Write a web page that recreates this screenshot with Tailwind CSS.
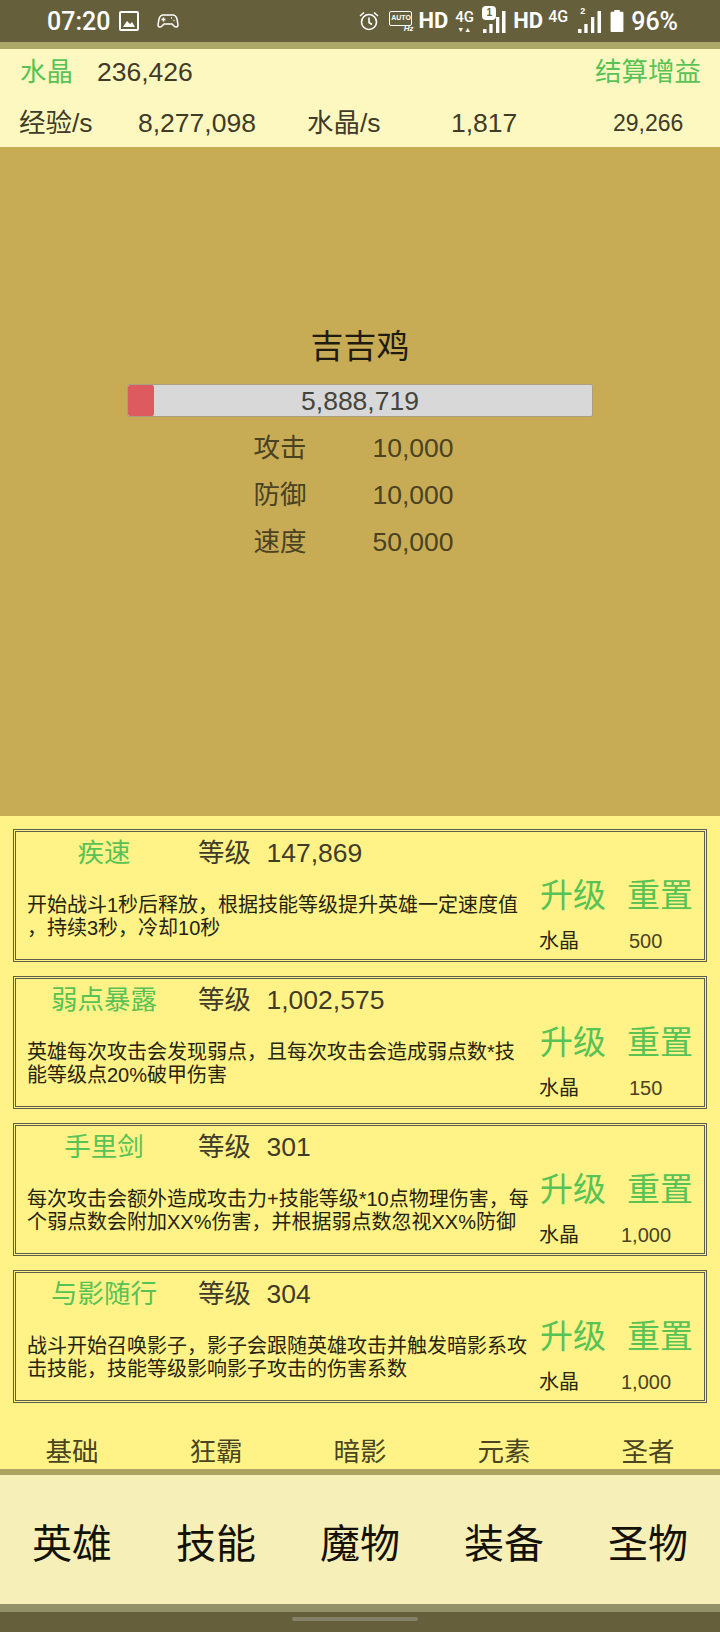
<!DOCTYPE html>
<html lang="zh">
	<head>
		<meta charset="UTF-8" />
		<meta name="viewport" content="width=device-width, initial-scale=1.0" />
		<script src="https://cdn.jsdelivr.net/npm/@tailwindcss/browser@4"></script>
		<title>吉吉鸡</title>
	</head>
	<body class="w-[720px] h-[1632px] overflow-hidden flex flex-col bg-[#665f3c] font-['Liberation_Sans','Noto_Sans_CJK_SC',sans-serif] text-[26.5px] leading-[32px] text-[#3f3b28]">
		<!-- Status bar -->
		<div class="h-[42px] flex items-center pl-[47px] text-white shrink-0">
			<span class="font-['Roboto',sans-serif] text-[25px] font-medium w-[72px] mt-[2px]">07:20</span>
			<svg class="ml-[-1px]" width="22" height="22" viewBox="0 0 22 22" fill="none"><rect x="2" y="2" width="18" height="18" rx="1" stroke="#fff" stroke-width="2"/><path d="M5 17l4-6 3 3 2-2 3 5z" fill="#fff"/></svg>
			<svg class="ml-[17px]" width="22" height="16" viewBox="0 0 22 16" fill="none" stroke="#fff" stroke-width="1.5"><path d="M6 2h10c2 0 3 1 4 4l1 6c0 2-2 3-4 1l-2-2H7l-2 2c-2 2-4 1-4-1l1-6c1-3 2-4 4-4z"/><path d="M4.5 6.500h4M6.500 4.500v4M14 5h1M16.500 7.500h1"/></svg>
			<div class="ml-auto flex items-center pr-[42px]">
				<svg width="22" height="22" viewBox="0 0 22 22" fill="none" stroke="#fff" stroke-width="1.6"><circle cx="11" cy="12" r="7.500"/><path d="M11 7.500V12.500l3 2M2 6l4-3.500M20 6l-4-3.500"/></svg>
				<div class="relative ml-[9px] w-[24px] h-[22px]">
					<div class="w-[23px] h-[15px] border-[1.500px] border-white rounded-[2px] mt-[1px] text-[7px] leading-[12px] font-bold text-center overflow-hidden">AUTO</div>
					<span class="absolute right-0 top-[15px] text-[8px] leading-[8px] italic font-bold">Hz</span>
				</div>
				<span class="ml-[5px] font-['Roboto',sans-serif] text-[22px] font-bold">HD</span>
				<div class="relative ml-[7px] w-[20px] h-[30px] text-[15px] leading-[15px] font-['Roboto',sans-serif] font-medium">
					<span class="absolute left-0 top-[4px]">4G</span>
					<span class="absolute left-[2px] top-[20px] text-[7px] leading-[8px] whitespace-nowrap">▼▲</span>
				</div>
				<div class="relative ml-[6px] w-[28px] h-[32px] mt-[-8px]">
					<svg class="absolute left-0 top-0" width="28" height="32" viewBox="0 0 28 32" fill="#fff"><rect x="2" y="28" width="3.500" height="4"/><rect x="8.300" y="23" width="3.300" height="9"/><rect x="15" y="16" width="3.300" height="16"/><rect x="21" y="10" width="3.500" height="22"/></svg>
					<span class="absolute left-[1px] top-[5px] w-[14px] h-[14px] rounded-[4px] bg-white text-[#665f3c] text-[10px] leading-[14px] font-bold text-center">1</span>
				</div>
				<span class="ml-[4px] font-['Roboto',sans-serif] text-[22px] font-bold">HD</span>
				<span class="ml-[5px] font-['Roboto',sans-serif] text-[16px] font-medium mt-[-8px]">4G</span>
				<div class="relative ml-[10px] w-[26px] h-[32px] mt-[-8px]">
					<span class="absolute left-[2px] top-[4px] text-[9px] leading-[12px] font-bold">2</span>
					<svg class="absolute left-0 top-0" width="26" height="32" viewBox="0 0 26 32" fill="#fff"><rect x="0" y="28" width="3.500" height="4"/><rect x="6.300" y="23" width="3.300" height="9"/><rect x="13" y="16" width="3.300" height="16"/><rect x="19.500" y="10" width="3.500" height="22"/></svg>
				</div>
				<svg class="ml-[6px]" width="14" height="22" viewBox="0 0 14 24" fill="#fff"><path d="M4 0h6v2h3a1 1 0 0 1 1 1v20a1 1 0 0 1-1 1H1a1 1 0 0 1-1-1V3a1 1 0 0 1 1-1h3z"/></svg>
				<span class="ml-[7px] font-['Roboto',sans-serif] text-[25px] font-medium mt-[2px]">96%</span>
			</div>
		</div>
		<div class="h-[7px] bg-[#aba768] shrink-0"></div>

		<!-- Top panel -->
		<div class="h-[98px] bg-[#fdf8c0] shrink-0">
			<div class="h-[45px] flex items-center pl-[20px] pr-[19px]">
				<span class="text-[#58c255] w-[77px]">水晶</span>
				<span>236,426</span>
				<span class="ml-auto text-[#58c255]">结算增益</span>
			</div>
			<div class="flex items-center h-[53px] pt-[5px] pl-[19px]">
				<span class="w-[119px]">经验/s</span>
				<span class="w-[169px]">8,277,098</span>
				<span class="w-[144px]">水晶/s</span>
				<span class="w-[162px]">1,817</span>
				<span class="text-[23px]">29,266</span>
			</div>
		</div>

		<!-- Monster -->
		<div class="h-[669px] bg-[#c7ac55] shrink-0 flex flex-col items-center pt-[179px]">
			<div class="text-[33px] leading-[42px] text-[#1f1b10]">吉吉鸡</div>
			<div class="relative mt-[16px] w-[466px] h-[33px] bg-[#d8d8d8] border border-[#a8a080] rounded-[2px] text-center text-[#44443c] text-[26.5px] leading-[32px]">
				<div class="absolute left-0 top-0 h-full w-[26px] bg-[#dd5a5f] rounded-[2px]"></div>
				<span class="relative">5,888,719</span>
			</div>
			<div class="mt-[15px] w-[200px] flex flex-col gap-[15px] ml-[-13px] text-[#4a4222]">
				<div class="flex h-[32px]"><span class="w-[119px]">攻击</span><span>10,000</span></div>
				<div class="flex h-[32px]"><span class="w-[119px]">防御</span><span>10,000</span></div>
				<div class="flex h-[32px]"><span class="w-[119px]">速度</span><span>50,000</span></div>
			</div>
		</div>

		<!-- Skills -->
		<div class="h-[653px] bg-[#fff388] shrink-0 flex flex-col pt-[13px] px-[13px]">
			<div class="flex flex-col gap-[14px]">
				<div class="h-[133px] border-[3px] border-double border-[#5f5e4c] bg-[#fff388] pl-[11px] flex flex-col">
					<div class="flex h-[42px] items-center">
						<span class="w-[154px] text-center text-[#58c255]">疾速</span>
						<span class="ml-[17px] w-[68.5px]">等级</span>
						<span>147,869</span>
					</div>
					<div class="flex flex-1">
						<p class="w-[512px] shrink-0 whitespace-nowrap text-[20px] leading-[23px] text-[#26230f] pt-[20px]">开始战斗1秒后释放，根据技能等级提升英雄一定速度值<br />，持续3秒，冷却10秒</p>
						<div class="flex-1">
							<div class="flex text-[33px] leading-[40px] text-[#58c255] gap-[21px] mt-[2px] ml-[1px]"><span>升级</span><span>重置</span></div>
							<div class="flex text-[20px] mt-[11px] leading-[28px]"><span class="w-[90px] text-[#2b2710]">水晶</span><span class="text-[#4a4222]">500</span></div>
						</div>
					</div>
				</div>
				<div class="h-[133px] border-[3px] border-double border-[#5f5e4c] bg-[#fff388] pl-[11px] flex flex-col">
					<div class="flex h-[42px] items-center">
						<span class="w-[154px] text-center text-[#58c255]">弱点暴露</span>
						<span class="ml-[17px] w-[68.5px]">等级</span>
						<span>1,002,575</span>
					</div>
					<div class="flex flex-1">
						<p class="w-[512px] shrink-0 whitespace-nowrap text-[20px] leading-[23px] text-[#26230f] pt-[20px]">英雄每次攻击会发现弱点，且每次攻击会造成弱点数*技<br />能等级点20%破甲伤害</p>
						<div class="flex-1">
							<div class="flex text-[33px] leading-[40px] text-[#58c255] gap-[21px] mt-[2px] ml-[1px]"><span>升级</span><span>重置</span></div>
							<div class="flex text-[20px] mt-[11px] leading-[28px]"><span class="w-[90px] text-[#2b2710]">水晶</span><span class="text-[#4a4222]">150</span></div>
						</div>
					</div>
				</div>
				<div class="h-[133px] border-[3px] border-double border-[#5f5e4c] bg-[#fff388] pl-[11px] flex flex-col">
					<div class="flex h-[42px] items-center">
						<span class="w-[154px] text-center text-[#58c255]">手里剑</span>
						<span class="ml-[17px] w-[68.5px]">等级</span>
						<span>301</span>
					</div>
					<div class="flex flex-1">
						<p class="w-[512px] shrink-0 whitespace-nowrap text-[20px] leading-[23px] text-[#26230f] pt-[20px]">每次攻击会额外造成攻击力+技能等级*10点物理伤害，每<br />个弱点数会附加XX%伤害，并根据弱点数忽视XX%防御</p>
						<div class="flex-1">
							<div class="flex text-[33px] leading-[40px] text-[#58c255] gap-[21px] mt-[2px] ml-[1px]"><span>升级</span><span>重置</span></div>
							<div class="flex text-[20px] mt-[11px] leading-[28px]"><span class="w-[82px] text-[#2b2710]">水晶</span><span class="text-[#4a4222]">1,000</span></div>
						</div>
					</div>
				</div>
				<div class="h-[133px] border-[3px] border-double border-[#5f5e4c] bg-[#fff388] pl-[11px] flex flex-col">
					<div class="flex h-[42px] items-center">
						<span class="w-[154px] text-center text-[#58c255]">与影随行</span>
						<span class="ml-[17px] w-[68.5px]">等级</span>
						<span>304</span>
					</div>
					<div class="flex flex-1">
						<p class="w-[512px] shrink-0 whitespace-nowrap text-[20px] leading-[23px] text-[#26230f] pt-[20px]">战斗开始召唤影子，影子会跟随英雄攻击并触发暗影系攻<br />击技能，技能等级影响影子攻击的伤害系数</p>
						<div class="flex-1">
							<div class="flex text-[33px] leading-[40px] text-[#58c255] gap-[21px] mt-[2px] ml-[1px]"><span>升级</span><span>重置</span></div>
							<div class="flex text-[20px] mt-[11px] leading-[28px]"><span class="w-[82px] text-[#2b2710]">水晶</span><span class="text-[#4a4222]">1,000</span></div>
						</div>
					</div>
				</div>
			</div>
			<div class="mt-auto mb-[1px] mx-[-13px] grid grid-cols-5 text-center text-[#4a4520]">
				<span>基础</span><span>狂霸</span><span>暗影</span><span>元素</span><span>圣者</span>
			</div>
		</div>
		<div class="h-[6px] bg-[#aba561] shrink-0"></div>

		<!-- Bottom nav -->
		<div class="h-[129px] pt-[8px] bg-[#f6f0b8] shrink-0 grid grid-cols-5 items-center text-center text-[40px] text-[#141208]">
			<span>英雄</span><span>技能</span><span>魔物</span><span>装备</span><span>圣物</span>
		</div>
		<div class="h-[8px] bg-[#94906a] shrink-0"></div>
		<div class="flex-1 flex justify-center pt-[5px]">
			<div class="w-[126px] h-[4px] ml-[-10px] rounded-full bg-[#85806a]"></div>
		</div>
	</body>
</html>
